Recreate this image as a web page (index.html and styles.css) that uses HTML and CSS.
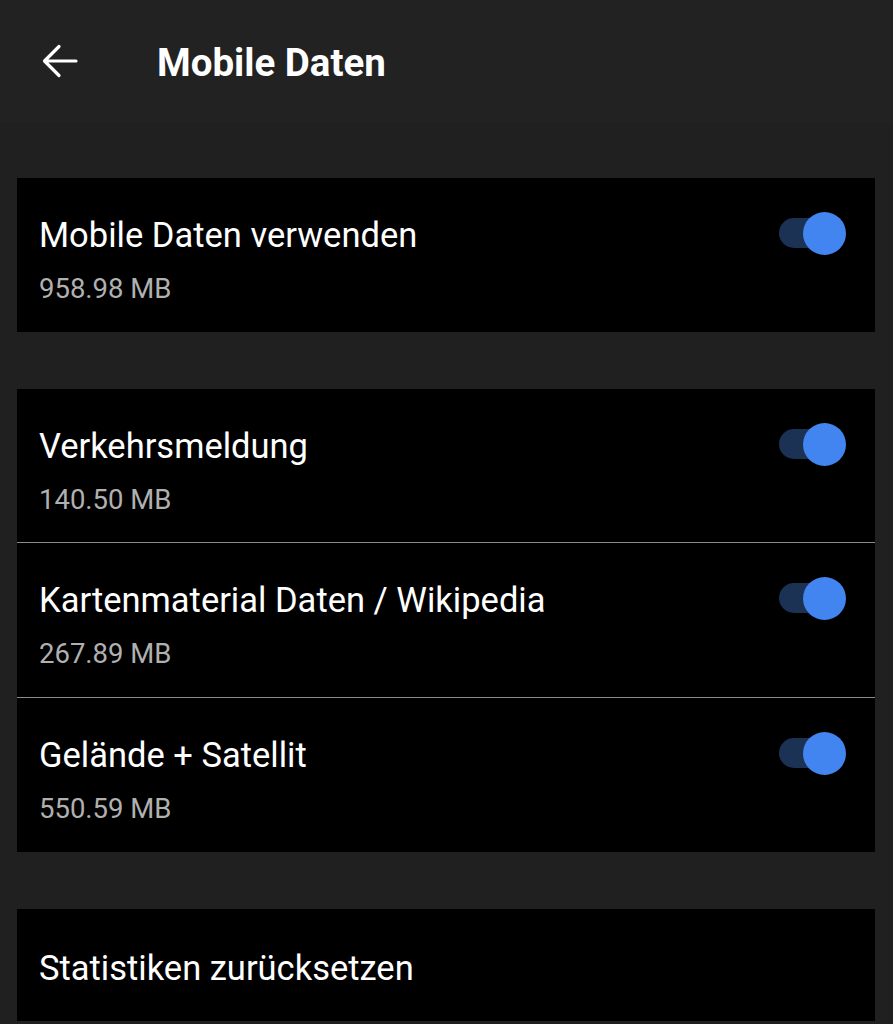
FILE: index.html
```html
<!DOCTYPE html>
<html lang="de">
<head>
    <meta charset="UTF-8">
    <meta name="viewport" content="width=device-width, initial-scale=1.0">
    <title>Mobile Daten</title>
    <link rel="stylesheet" href="styles.css">
</head>
<body>
    <header class="topbar">
        <button class="back" aria-label="Zurück">
            <svg width="36" height="36" viewBox="0 0 36 36">
                <path d="M34 18H3M17 3.5L2.5 18L17 32.5" fill="none" stroke="#fff" stroke-width="3.2" stroke-linecap="round" stroke-linejoin="round"/>
            </svg>
        </button>
        <h1>Mobile Daten</h1>
    </header>

    <main class="content">
        <section class="card">
            <div class="row">
                <div class="text">
                    <div class="title">Mobile Daten verwenden</div>
                    <div class="sub">958.98 MB</div>
                </div>
                <span class="switch on"></span>
            </div>
        </section>

        <section class="card">
            <div class="row">
                <div class="text">
                    <div class="title">Verkehrsmeldung</div>
                    <div class="sub">140.50 MB</div>
                </div>
                <span class="switch on"></span>
            </div>
            <div class="row">
                <div class="text">
                    <div class="title">Kartenmaterial Daten / Wikipedia</div>
                    <div class="sub">267.89 MB</div>
                </div>
                <span class="switch on"></span>
            </div>
            <div class="row">
                <div class="text">
                    <div class="title">Gelände + Satellit</div>
                    <div class="sub">550.59 MB</div>
                </div>
                <span class="switch on"></span>
            </div>
        </section>

        <section class="card">
            <div class="row single">
                <div class="title">Statistiken zurücksetzen</div>
            </div>
        </section>
    </main>
</body>
</html>
```

FILE: styles.css
```css
/* Global */
body {
    margin: 0;
    background: #202020;
    color: #fff;
    font-family: Roboto, "Noto Sans", Arial, sans-serif;
}

/* Top bar */
.topbar {
    height: 122px;
    background: #222222;
    display: flex;
    align-items: center;
}

.back {
    background: none;
    border: none;
    padding: 0;
    margin-left: 42px;
    width: 36px;
    height: 36px;
    display: flex;
}

.topbar h1 {
    margin: 3px 0 0 79px;
    font-size: 38.5px;
    font-weight: 700;
}

/* Cards */
.content {
    padding: 56px 18px 0 17px;
    display: flex;
    flex-direction: column;
    gap: 57px;
}

.card {
    background: #000;
}

.row {
    height: 154px;
    box-sizing: border-box;
    display: flex;
    align-items: flex-start;
    justify-content: space-between;
    padding: 37px 40px 0 22px;
}

.row + .row {
    height: 155px;
    border-top: 1px solid #8a8a8a;
}

.row:first-child:not(:last-child) {
    height: 153px;
}

.row.single {
    height: 112px;
    padding-top: 39px;
}

.title {
    font-size: 34.5px;
    line-height: 40px;
}

.sub {
    font-size: 27.5px;
    line-height: 32px;
    color: #b0b0b0;
    margin-top: 18px;
}

/* Toggle */
.switch {
    position: relative;
    margin-top: 3px;
    width: 56px;
    height: 30px;
    border-radius: 15px;
    background: #1b3255;
}

.switch.on::after {
    content: "";
    position: absolute;
    right: -11px;
    top: -6.5px;
    width: 43px;
    height: 43px;
    border-radius: 50%;
    background: #4285f0;
}
```
